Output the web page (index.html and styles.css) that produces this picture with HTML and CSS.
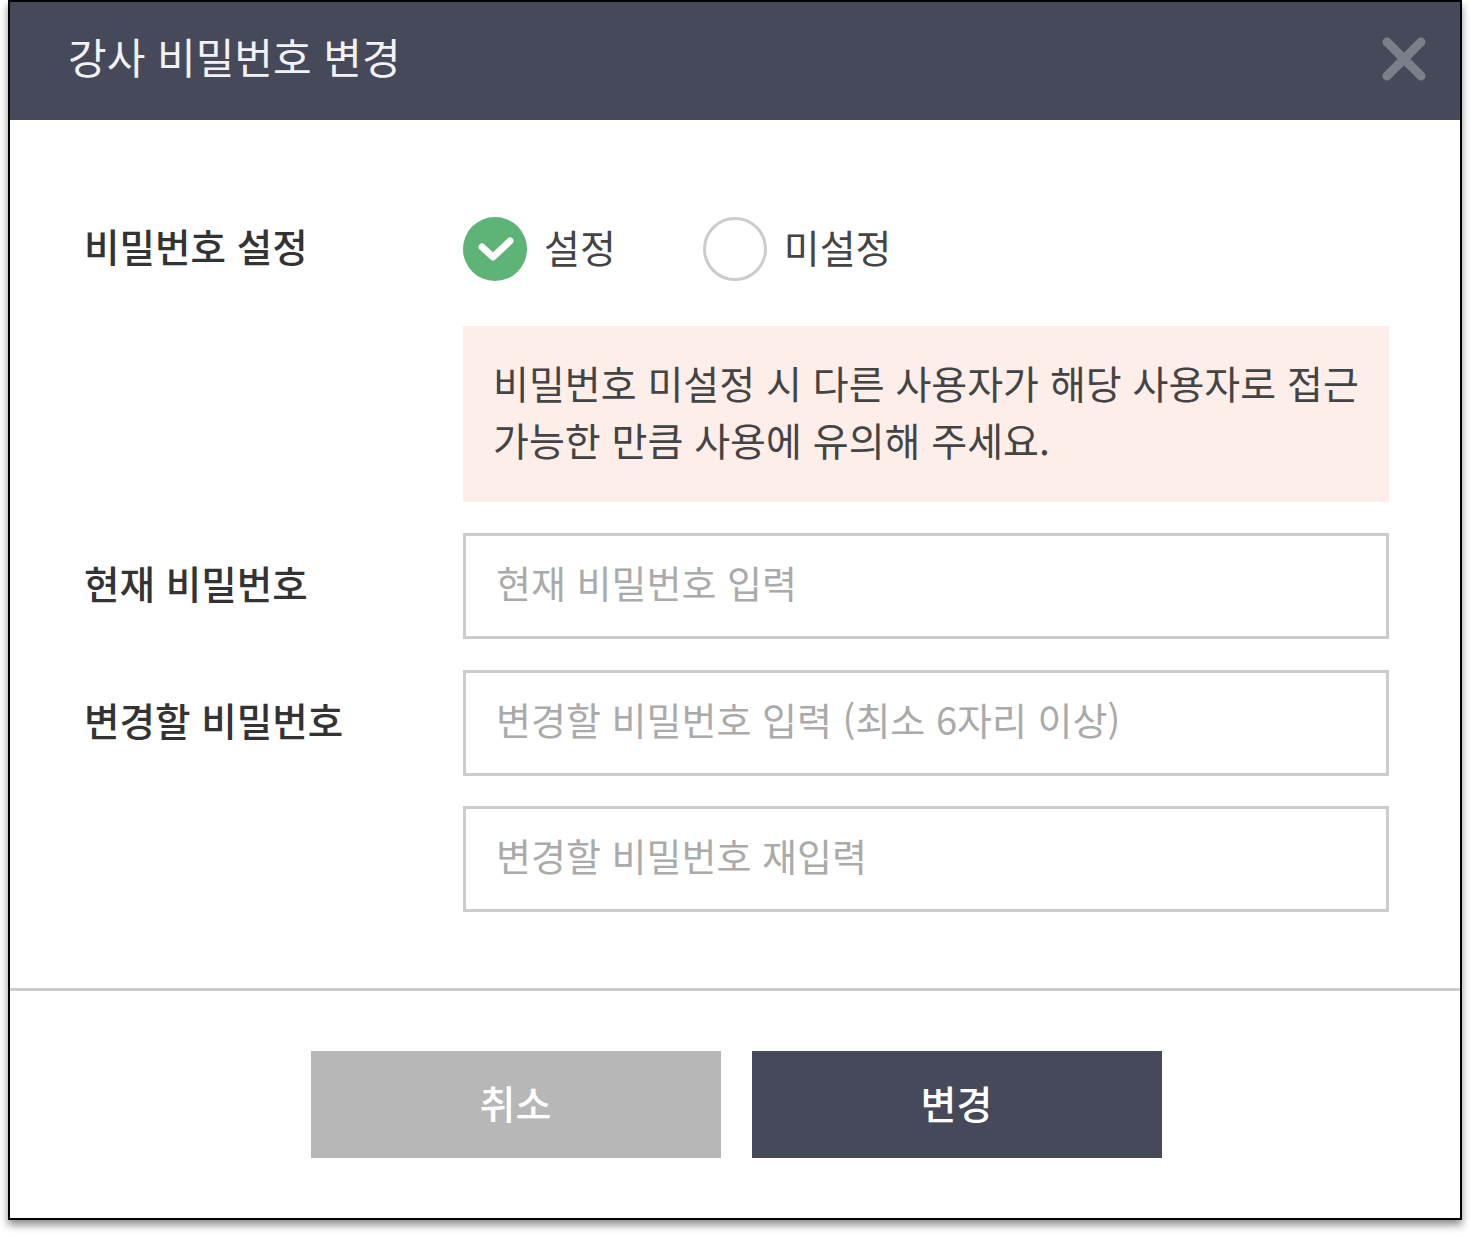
FILE: index.html
```html
<!DOCTYPE html>
<html lang="ko">
<head>
  <meta charset="UTF-8">
  <title>강사 비밀번호 변경</title>
  <link rel="stylesheet" href="styles.css">
</head>
<body>
  <div class="modal">
    <div class="modal-header">
      <h1 class="modal-title">강사 비밀번호 변경</h1>
      <svg class="close-icon" width="46" height="46" viewBox="0 0 46 46">
        <path d="M6 6L40 40M40 6L6 40" stroke="#7c7f8a" stroke-width="9" stroke-linecap="round" fill="none"/>
      </svg>
    </div>

    <div class="modal-body">
      <div class="form-row radio-row">
        <div class="form-label">비밀번호 설정</div>
        <div class="radio-group">
          <div class="radio-item">
            <svg class="radio-check" width="64" height="64" viewBox="0 0 64 64">
              <circle cx="32" cy="32" r="32" fill="#5eb377"/>
              <path d="M19 30L30 40L47 24" stroke="#fff" stroke-width="7" stroke-linecap="round" stroke-linejoin="round" fill="none"/>
            </svg>
            <span class="radio-text">설정</span>
          </div>
          <div class="radio-item">
            <span class="radio-empty"></span>
            <span class="radio-text">미설정</span>
          </div>
        </div>
      </div>

      <div class="form-row notice-row">
        <div class="form-label"></div>
        <div class="notice">비밀번호 미설정 시 다른 사용자가 해당 사용자로 접근<br>가능한 만큼 사용에 유의해 주세요.</div>
      </div>

      <div class="form-row">
        <div class="form-label">현재 비밀번호</div>
        <input class="text-input" placeholder="현재 비밀번호 입력">
      </div>
      <div class="form-row form-row-tight">
        <div class="form-label">변경할 비밀번호</div>
        <input class="text-input" placeholder="변경할 비밀번호 입력 (최소 6자리 이상)">
      </div>
      <div class="form-row">
        <div class="form-label"></div>
        <input class="text-input" placeholder="변경할 비밀번호 재입력">
      </div>
    </div>

    <div class="modal-footer">
      <button class="btn btn-cancel">취소</button>
      <button class="btn btn-submit">변경</button>
    </div>
  </div>
</body>
</html>
```

FILE: styles.css
```css
* {
  box-sizing: border-box;
}

body {
  margin: 0;
  min-height: 1236px;
  background: #fff;
  font-family: "Noto Sans CJK KR", "Noto Sans", sans-serif;
  color: #333;
}

.modal {
  width: 1454px;
  height: 1220px;
  margin-left: 8px;
  background: #fff;
  border: 2px solid #000;
  box-shadow: 0 5px 8px rgba(0, 0, 0, 0.45);
}

.modal-header {
  height: 118px;
  background: #464959;
  display: flex;
  align-items: center;
  justify-content: space-between;
  padding: 0 33px 0 58px;
}

.modal-title {
  margin: 0 0 12px;
  font-size: 42px;
  font-weight: 400;
  color: #f2f2f4;
}

.close-icon {
  margin-bottom: 4px;
}

.modal-body {
  padding: 93px 71px 0 74px;
}

.form-row {
  display: grid;
  grid-template-columns: 379px 926px;
  align-items: center;
  margin-bottom: 31px;
}

.form-row-tight {
  margin-bottom: 30px;
}

.form-label {
  font-size: 38.6px;
  font-weight: 500;
  line-height: 64px;
  color: #333;
  margin-bottom: 8px;
}

.radio-row {
  margin-bottom: 41px;
}

.radio-group {
  display: flex;
  gap: 87px;
}

.radio-item {
  display: flex;
  align-items: center;
  gap: 17px;
  font-size: 39px;
  color: #444;
}

.radio-text {
  margin-bottom: 6px;
}

.radio-empty {
  width: 64px;
  height: 64px;
  border: 3px solid #ccc;
  border-radius: 50%;
}

.notice {
  height: 176px;
  padding: 28px 30px;
  background: #fdeeea;
  font-size: 39px;
  line-height: 57px;
  color: #444;
  white-space: nowrap;
}

.text-input {
  width: 926px;
  height: 106px;
  padding: 0 30px 9px;
  border: 3px solid #ccc;
  border-radius: 0;
  outline: none;
  font-family: inherit;
  font-size: 38px;
}

.text-input::placeholder {
  color: #aaa;
  opacity: 1;
}

.modal-footer {
  margin-top: 76px;
  border-top: 3px solid #ccc;
  padding: 60px 0 0 2px;
  display: flex;
  justify-content: center;
  gap: 31px;
}

.btn {
  width: 410px;
  height: 107px;
  padding: 0 0 6px;
  border: none;
  font-family: inherit;
  font-size: 39px;
  font-weight: 500;
  color: #fff;
}

.btn-cancel {
  background: #b7b7b7;
}

.btn-submit {
  background: #464959;
}
```
